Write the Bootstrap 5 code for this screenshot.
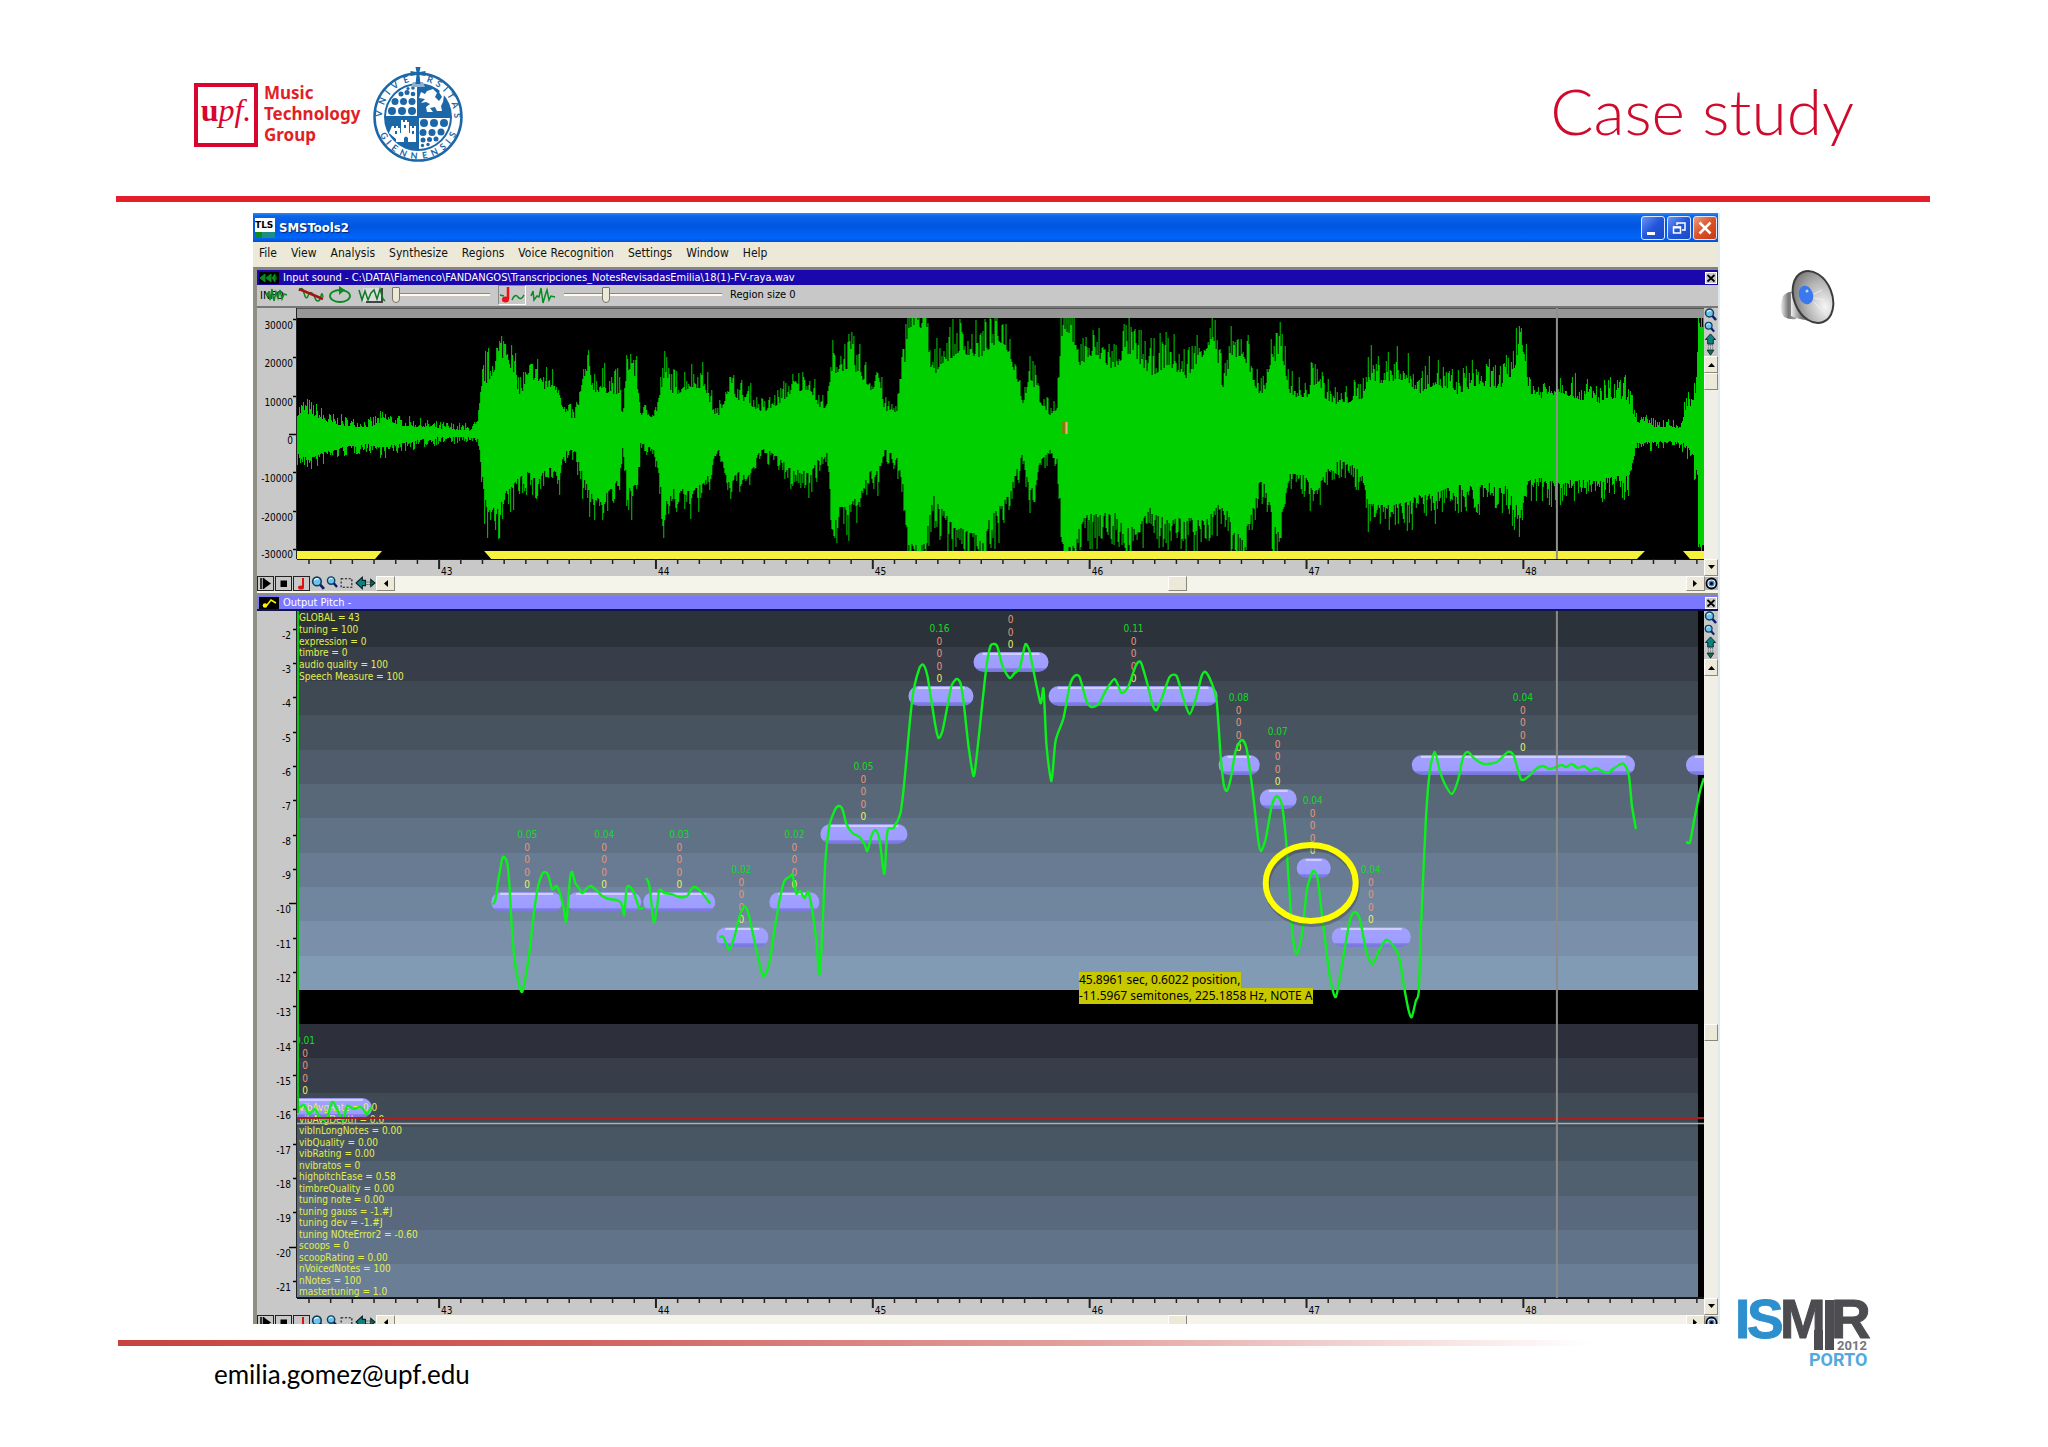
<!DOCTYPE html>
<html lang="en">
<head>
<meta charset="utf-8">
<meta name="viewport" content="width=device-width, initial-scale=1">
<title>Case study</title>
<link rel="stylesheet" href="https://cdn.jsdelivr.net/npm/bootstrap@5.3.0/dist/css/bootstrap.min.css">
<script src="https://cdn.jsdelivr.net/npm/bootstrap@5.3.0/dist/js/bootstrap.bundle.min.js"></script>
<style>
:root{--ui:"DejaVu Sans Condensed","Noto Sans",sans-serif}
body{background:#fff;color:#000;font-family:"Noto Sans",sans-serif}
svg{display:block}
.slide{padding:0 118px 0 116px}
.slide-head{height:196px;padding:64px 76px 0 78px}
.upf-box{width:64px;height:64px;border:4px solid #d8062f;color:#d8062f;font:italic 32px/46px "Liberation Serif",serif;margin-top:19px}
.upf-box b{font-style:normal}
.group-name{font:700 17px/21px "Noto Sans",sans-serif;color:#e21f26;width:105px;margin:18px 2px 0 6px}
.slide-title{font:300 64px/80px Lato,sans-serif;color:#cf0a2c;margin:7px 0 0}
.rule-top{height:6px;background:#e51e2c}
.rule-bottom{height:6px;margin:16px 128px 0 2px;background:linear-gradient(90deg,#c5443f,#d0605c 30%,#e2a09d 65%,#fff)}
.mail{font:26px/32px Lato,sans-serif;color:#000;margin:12px 0 0 98px;text-decoration:none;display:inline-block}
.side{width:210px;padding:58px 0 20px}
.speaker{margin-left:58px}
.logo-ismir{margin-left:15px}
.app-window{margin:11px 0 0 137px;background:#c8c8c8;font-family:var(--ui);border-right:2px solid #dfe9ee;overflow:hidden}
.app-title{height:29px;background:linear-gradient(#2a8cf5 0,#0a66ea 10%,#0055e0 45%,#0065fb 85%,#0050d8);padding:0 1px 0 2px;gap:4px}
.app-title h2{font:700 13px/20px "DejaVu Sans Condensed",sans-serif;color:#fff;margin:0;text-shadow:1px 1px 1px #002a80}
.win-btns{gap:2px}
.win-btn{width:24px;height:24px;padding:0;border:1px solid #dce8ff;border-radius:3px;background:linear-gradient(135deg,#6c93f5,#2156dc 50%,#1c49c4)}
.win-close{background:linear-gradient(135deg,#f09a80,#dd5027 50%,#c43c14)}
.app-menu{height:25px;background:#ece9d8;padding:0 0 3px 6px;gap:14px}
.app-menu a{font-size:12px;line-height:20px;color:#111;text-decoration:none}
.mdi{border-top:3px solid #85837a;border-left:4px solid #908f84}
.doc-title{height:15px;background:#1a08ad;color:#fff;padding:0 1px 0 2px;gap:4px;font-size:11px;line-height:14px}
.doc-title.alt{background:#7a78ff;border-bottom:2px solid #12124c}
.doc-close{width:12px;height:12px;padding:0;border:1px solid #fff;background:#c8c8c8}
.tools{height:23px;padding:0 0 2px 3px;border-bottom:2px solid #777}
.tools button{border:0;background:none;padding:0}
.tools .pressed{border:1px solid #888;border-right-color:#fff;border-bottom-color:#fff;height:20px}
.tools label{font-size:11px;line-height:16px}
.sld{-webkit-appearance:none;appearance:none;height:16px;background:none;margin:0}
.sld::-webkit-slider-runnable-track{height:3px;background:#fffbe8;border-top:1px solid #8a8a7a}
.sld::-webkit-slider-thumb{-webkit-appearance:none;width:8px;height:16px;margin-top:-7px;background:#ece9d8;border:1px solid #77756a;border-radius:1px 1px 4px 4px}
.y-scale{width:40px;flex:none}
.edge{width:14px;flex:none;background:#c8c8c8}
.vbar{background:#f0efe6}
.sb{background:#ece9d8;border:1px solid #fff;border-right-color:#8a887c;border-bottom-color:#8a887c;padding:0;line-height:0;display:flex;align-items:center;justify-content:center}
.edge .sb{width:14px;height:17px}
.wave{height:251px}
.pitch{height:687px}
.x-scale{height:17px;background:#c8c8c8}
.x-scale svg.flex-grow-1{margin-left:40px}
.hbar{height:17px;background:#f5f4ea}
.hbar .sb{width:19px;height:15px}
.hbar .tool-cell{width:17px;height:15px;border:1px solid #222;background:#c8c8c8;padding:0}
.hbar-strip{background:#c8c8c8;gap:1px}
.cut{height:9px;overflow:hidden}
.doc-gap{height:3px;background:#8f8e84}
.ax{font:10px var(--ui);fill:#000}
.nv{font:10px var(--ui);text-anchor:middle}
.readout{position:absolute;left:2px;color:#e2ee4e;font-size:10px;line-height:11px;white-space:nowrap;display:flex;flex-direction:column;justify-content:space-between}
.r-top{top:1px;height:70px}
.r-low{bottom:1px;height:195px}
.hint{position:absolute;left:56%;top:361px;margin-left:-6px;font:12px/16px "Noto Sans",sans-serif;color:#000;white-space:nowrap}
.hint span{background:#c8c800;display:table}
</style>
</head>
<body>
<svg width="0" height="0" class="position-absolute" aria-hidden="true">
 <defs>
  <symbol id="i-zoom" viewBox="0 0 13 13"><circle cx="5.500" cy="5" r="4" fill="#6cc4ee" stroke="#10405c" stroke-width="1.500"/><path d="M3 4Q5 1.500 7 3" stroke="#fff" fill="none"/><path d="M8.500 8l3.500 4" stroke="#0c1c70" stroke-width="2.500"/></symbol>
  <symbol id="i-up" viewBox="0 0 13 13"><path d="M6.500 1L12 7H9.500v5h-6V7H1z" fill="#0e8080" stroke="#022" /></symbol>
  <symbol id="i-down" viewBox="0 0 13 13"><path d="M4 0v5M6.500 0v5M9 0v5" stroke="#555" stroke-dasharray="1 1"/><path d="M2.500 6h8l-4 6z" fill="#0e7050" stroke="#022"/></symbol>
  <symbol id="i-sel" viewBox="0 0 14 13"><rect x="2" y="2.500" width="10" height="8" fill="none" stroke="#111" stroke-dasharray="2 1.500"/></symbol>
  <symbol id="i-lr" viewBox="0 0 20 13"><path d="M1 6.500L7 1v3h3v5H7v3z" fill="#0e8080" stroke="#022"/><path d="M11 5.500h4M11 8h4" stroke="#333" stroke-dasharray="1 1"/><path d="M15 3l4 3.500L15 10z" fill="#0e7050" stroke="#022"/></symbol>
  <symbol id="i-eye" viewBox="0 0 13 13"><rect width="13" height="13" fill="#b5b5b5"/><circle cx="6.500" cy="6.500" r="5" fill="#fff" stroke="#001" stroke-width="1.800"/><circle cx="6.500" cy="6.500" r="3" fill="#2f7fd0"/><circle cx="6.500" cy="6.500" r="1.500" fill="#000"/></symbol>
  <symbol id="i-play" viewBox="0 0 15 13"><path d="M3 1v11M5.500 1v11" stroke="#000" stroke-width="1.500"/><path d="M6 1.500l7 5-7 5z"/></symbol>
  <symbol id="i-stop" viewBox="0 0 15 13"><rect x="4.500" y="3.500" width="6.500" height="6.500"/></symbol>
  <symbol id="i-note" viewBox="0 0 15 13"><path d="M9 1v9" stroke="#e01010" stroke-width="2"/><ellipse cx="7" cy="10.500" rx="3" ry="2" fill="#e01010"/></symbol>
  <radialGradient id="cone" cx=".7" cy=".75" r=".8"><stop offset="0" stop-color="#f6f6f6"/><stop offset=".6" stop-color="#b4b4b4"/><stop offset="1" stop-color="#7b7b7b"/></radialGradient>
  <linearGradient id="horn"><stop offset="0" stop-color="#eee"/><stop offset=".4" stop-color="#777"/><stop offset="1" stop-color="#bbb"/></linearGradient>
  <linearGradient id="pill" x2="0" y2="1"><stop offset="0" stop-color="#9694ea"/><stop offset=".12" stop-color="#a3a1ff"/><stop offset=".78" stop-color="#9e9cff"/><stop offset=".84" stop-color="#7f7de6"/><stop offset="1" stop-color="#7876d8"/></linearGradient>
 </defs>
</svg>

<main class="slide">
 <header class="slide-head d-flex justify-content-between align-items-start">
  <div class="d-flex align-items-start">
   <div class="upf-box text-center"><b>u</b>pf.</div>
   <div class="group-name">Music<br>Technology<br>Group</div>
   <svg width="94" height="102" viewBox="0 0 94 102" role="img" aria-label="Universitas Giennensis seal">
    <circle cx="47" cy="53" r="43.500" fill="#fff" stroke="#1b67a8" stroke-width="2.500"/>
    <circle cx="47" cy="53" r="34" fill="#1b67a8"/>
    <g transform="translate(0 -1)">
    <path d="M46 22A32 32 0 0 0 15 53H46zM48 86A32 32 0 0 0 79 55H48z" fill="#fff"/>
    <g fill="#1b67a8"><circle cx="21" cy="48" r="4"/><circle cx="31" cy="48" r="4"/><circle cx="41" cy="48" r="4"/><circle cx="24" cy="38.500" r="3.500"/><circle cx="32.500" cy="38.500" r="3.500"/><circle cx="41" cy="38.500" r="3.500"/><circle cx="30" cy="31" r="2.500"/><circle cx="36" cy="29.500" r="2.500"/><circle cx="42" cy="31" r="2.300"/><circle cx="37" cy="25.500" r="1.600"/><circle cx="42" cy="25" r="1.800"/>
    <circle cx="53" cy="60" r="4"/><circle cx="63" cy="60" r="4"/><circle cx="73" cy="60" r="4"/><circle cx="52" cy="69.500" r="3.500"/><circle cx="61" cy="69.500" r="3.500"/><circle cx="70" cy="69" r="3.500"/><circle cx="52" cy="77" r="2.500"/><circle cx="58.500" cy="76.500" r="2.500"/><circle cx="65" cy="76" r="2.500"/><circle cx="51.500" cy="82.500" r="1.700"/><circle cx="57" cy="81.500" r="1.700"/></g>
    <path d="M21 63h2v2h2v-2h2v2h2v5h1V57h2v2h2v-2h2v2h2v11h1v-7h2v2h2v-2h2v16h-8v-4q-2-3-4 0v4h-8v-3l-7-6z" fill="#fff"/>
    <path d="M33 62h2v3h-2zM24 68h2v3h-2zM41 68h2v3h-2z" fill="#1b67a8"/>
    <path d="M50 29l4 2 2-3 6-2 4 4-2 4 4 4 3-4-3-5 3-3 2 6-1 7-2 4 1 5h-5l-2-4-5 1 3 4h-6l-1-5 4-3-4-2-5 1 4-4-6-1z" fill="#fff"/>
    </g>
    <path d="M42 18h10l2 5H40z" fill="#8fb0cf"/>
    <path d="M44.500 3h5l-1 5 6-1v5l-6-1 1 9h-5l1-9-6 1V7l6 1z" fill="#1b67a8"/>
    <g id="sealText" fill="#1b67a8" font-family="Lato,sans-serif" font-size="9" font-weight="700" text-anchor="middle"></g>
   </svg>
  </div>
  <h1 class="slide-title">Case study</h1>
 </header>
 <div class="rule-top"></div>

 <div class="d-flex">
  <div class="flex-grow-1">
   <section class="app-window" aria-label="SMSTools2">
    <div class="app-title d-flex align-items-center">
     <svg width="20" height="20" viewBox="0 0 20 20"><rect width="20" height="20" fill="#fff"/><rect y="14" width="20" height="6" fill="#1b8f86"/><rect y="14" width="7" height="6" fill="#0a8a20"/><text x="0" y="10" font-size="9" font-weight="700" font-family="DejaVu Sans">TLS</text></svg>
     <h2 class="me-auto">SMSTools2</h2>
     <div class="win-btns d-flex">
     <button class="win-btn" aria-label="Minimize"><svg width="22" height="22"><rect x="5" y="15" width="8" height="3" fill="#fff"/></svg></button>
     <button class="win-btn" aria-label="Restore"><svg width="22" height="22" fill="none" stroke="#fff" stroke-width="1.500"><path d="M9 8V6h8v7h-3"/><rect x="5.500" y="10" width="7" height="6"/><path d="M5 10.500h8" stroke-width="2"/></svg></button>
     <button class="win-btn win-close" aria-label="Close"><svg width="22" height="22"><path d="M5.500 5.500l11 11m0-11l-11 11" stroke="#fff" stroke-width="2.500"/></svg></button>
     </div>
    </div>
    <nav class="app-menu d-flex align-items-center"><a href="#">File</a><a href="#">View</a><a href="#">Analysis</a><a href="#">Synthesize</a><a href="#">Regions</a><a href="#">Voice Recognition</a><a href="#">Settings</a><a href="#">Window</a><a href="#">Help</a></nav>

    <div class="mdi">
     <div class="doc-title d-flex align-items-center">
      <svg width="20" height="12"><rect width="20" height="12" fill="#000"/><path d="M1 6l5-4v8zM7 6l5-4v8zM13 6l3-4v8zM17 4v4" fill="#0a8a20" stroke="#0a8a20"/></svg>
      <span class="me-auto">Input sound - C:\DATA\Flamenco\FANDANGOS\Transcripciones_NotesRevisadasEmilia\18(1)-FV-raya.wav</span>
      <button class="doc-close" aria-label="Close sound"><svg width="10" height="10"><path d="M1.500 2l7 6.500m0-6.500l-7 6.500" stroke="#000" stroke-width="1.800"/></svg></button>
     </div>
     <div class="tools d-flex align-items-center">
      <button aria-label="Info"><svg width="34" height="20"><text x="0" y="14" font-size="11" font-family="DejaVu Sans Condensed">INFO</text><path d="M6 10l2-2 2 7 2-11 2 12 2-9 2 6 2-8 2 9 2-5 3 1" fill="none" stroke="#0b8a25" stroke-width="1.500"/></svg></button>
      <button class="ms-1" aria-label="Remove noise"><svg width="26" height="20"><path d="M1 6q3-6 5 2t4 3 4-3 3 5 3 3 3-5 2 1" fill="none" stroke="#0b8a25" stroke-width="1.500"/><path d="M1 4l24 10" stroke="#a41616" stroke-width="2.500"/></svg></button>
      <button class="ms-1" aria-label="Loop"><svg width="26" height="20"><ellipse cx="12" cy="11" rx="10" ry="6" fill="none" stroke="#0b8a25" stroke-width="1.800"/><path d="M11 1l6 4-6 5z" fill="#0b8a25"/></svg></button>
      <button class="ms-1" aria-label="Spectrum"><svg width="30" height="20"><path d="M5 3h19v14H5z" fill="#ddd"/><path d="M24 3v14H8" fill="none" stroke="#444" stroke-width="2"/><path d="M1 5l3 10 3-9 3 9 3-7 3-3 3 9 3-10 3 10 2 2" fill="none" stroke="#0b7a25" stroke-width="1.500"/></svg></button>
      <input class="sld ms-1" style="width:98px" type="range" value="0" aria-label="Zoom">
      <button class="pressed ms-2" aria-label="Notes"><svg width="26" height="18"><path d="M9 1v12" stroke="#f00f14" stroke-width="2.500"/><ellipse cx="6.500" cy="13.500" rx="3.500" ry="3" fill="#f00f14"/><path d="M1 9l4 1M13 14q3-7 6-3t6-2" fill="none" stroke="#0b8a25" stroke-width="1.500"/></svg></button>
      <button class="ms-1" aria-label="Wave"><svg width="26" height="20"><path d="M1 11l2-5 1 9 3-4 2 1 2-9 2 15 2-7 2-6 2 10 2-4 4 1" fill="none" stroke="#0b8a25" stroke-width="1.500"/></svg></button>
      <input class="sld ms-2" style="width:158px" type="range" value="25" id="region" aria-label="Region size">
      <label for="region" class="ms-2">Region size 0</label>
     </div>
     <div class="d-flex wave">
      <svg class="y-scale" id="waveY" height="251"></svg>
      <svg class="flex-grow-1" id="wavePlot" height="251" width="100"></svg>
      <div class="edge d-flex flex-column">
       <svg width="13" height="13"><use href="#i-zoom"/></svg><svg width="11" height="12"><use href="#i-zoom"/></svg><svg width="13" height="12"><use href="#i-up"/></svg><svg width="13" height="11"><use href="#i-down"/></svg>
       <button class="sb" aria-label="Scroll up"><svg width="7" height="5"><path d="M0 5h7L3.500 1z"/></svg></button>
       <div class="sb"></div>
       <div class="vbar flex-grow-1"></div>
      </div>
     </div>
     <div class="x-scale d-flex"><svg class="flex-grow-1" width="100" height="17" data-axis></svg><div class="edge"><button class="sb" aria-label="Scroll down"><svg width="7" height="5"><path d="M0 0h7L3.500 4z"/></svg></button></div></div>
     <div class="hbar d-flex align-items-start"></div>
     <div class="doc-gap"></div>
     <div class="doc-title alt d-flex align-items-center">
      <svg width="20" height="12"><rect width="20" height="12" fill="#000"/><path d="M4 9l4-1 4-5 5 3" fill="none" stroke="#fff200" stroke-width="1.500"/><circle cx="6" cy="8.500" r="2.300" fill="#fff200"/></svg>
      <span class="me-auto">Output Pitch -</span>
      <button class="doc-close" aria-label="Close pitch"><svg width="10" height="10"><path d="M1.500 2l7 6.500m0-6.500l-7 6.500" stroke="#000" stroke-width="1.800"/></svg></button>
     </div>
     <div class="d-flex pitch">
      <svg class="y-scale" id="pitchY" height="687"></svg>
      <div class="flex-grow-1 position-relative">
       <svg id="pitchPlot" width="100%" height="687"></svg>
       <div class="readout r-top"><span>GLOBAL = 43</span><span>tuning = 100</span><span>expression = 0</span><span>timbre = 0</span><span>audio quality = 100</span><span>Speech Measure = 100</span></div>
       <div class="readout r-low"><span>vibAvgRate = 0.0</span><span>vibAvgDepth = 0.0</span><span>vibInLongNotes = 0.00</span><span>vibQuality = 0.00</span><span>vibRating = 0.00</span><span>nvibratos = 0</span><span>highpitchEase = 0.58</span><span>timbreQuality = 0.00</span><span>tuning note = 0.00</span><span>tuning gauss = -1.#J</span><span>tuning dev = -1.#J</span><span>tuning NOteError2 = -0.60</span><span>scoops = 0</span><span>scoopRating = 0.00</span><span>nVoicedNotes = 100</span><span>nNotes = 100</span><span>mastertuning = 1.0</span></div>
       <svg class="position-absolute top-0 start-0" id="pitchLines" width="100%" height="687"></svg>
       <div class="hint"><span>45.8961 sec, 0.6022 position,</span><span>-11.5967 semitones, 225.1858 Hz, NOTE A</span></div>
      </div>
      <div class="edge d-flex flex-column">
       <svg width="13" height="13"><use href="#i-zoom"/></svg><svg width="11" height="12"><use href="#i-zoom"/></svg><svg width="13" height="12"><use href="#i-up"/></svg><svg width="13" height="11"><use href="#i-down"/></svg>
       <button class="sb" aria-label="Scroll up"><svg width="7" height="5"><path d="M0 5h7L3.500 1z"/></svg></button>
       <div class="vbar flex-grow-1"></div>
       <div class="sb"></div>
       <div class="vbar" style="height:37.400%"></div>
      </div>
     </div>
     <div class="x-scale d-flex"><svg class="flex-grow-1" width="100" height="17" data-axis></svg><div class="edge"><button class="sb" aria-label="Scroll down"><svg width="7" height="5"><path d="M0 0h7L3.500 4z"/></svg></button></div></div>
     <div class="hbar cut d-flex align-items-start"></div>
    </div>
   </section>
   <div class="rule-bottom"></div>
   <a class="mail" href="mailto:emilia.gomez@upf.edu">emilia.gomez@upf.edu</a>
  </div>

  <aside class="side d-flex flex-column justify-content-between">
   <svg class="speaker" width="58" height="66" viewBox="0 0 58 66" role="img" aria-label="Sound">
    <path d="M5 36Q0 50 6 57q6 3 12 2l4-26q-10-4-17 3z" fill="url(#horn)"/>
    <path d="M13 34L25 16 40 62Q22 60 13 56z" fill="url(#horn)"/>
    <ellipse cx="35" cy="37" rx="19" ry="27" transform="rotate(-22 35 37)" fill="url(#cone)" stroke="#3c3c3c" stroke-width="2"/>
    <ellipse cx="28" cy="35" rx="7" ry="9.500" transform="rotate(-18 28 35)" fill="#3b78f0"/>
    <circle cx="29" cy="31" r="1.500" fill="#bcd4ff"/>
    <path d="M36 42l13 14M36 38l10 2M36 34l8-4" stroke="#eee" fill="none"/>
   </svg>
   <svg class="logo-ismir" width="140" height="74" viewBox="0 0 140 74" role="img" aria-label="ISMIR 2012 Porto">
    <g font-family="Liberation Sans,sans-serif" font-weight="700" font-size="55" stroke-width="1">
     <text x="0" y="42" fill="#2e8fce" stroke="#2e8fce">I</text><text x="12" y="42" fill="#2e8fce" stroke="#2e8fce">S</text><text x="45" y="42" fill="#4d4c50" stroke="#4d4c50">M</text><text x="96" y="42" fill="#4d4c50" stroke="#4d4c50">R</text>
    </g>
    <path d="M79 34h9v20h-9zM90 4h9v50h-9z" fill="#4d4c50"/>
    <g font-family="Roboto,sans-serif" font-weight="700"><text x="102" y="54" font-size="13" fill="#77767a">2012</text><text x="74" y="70" font-size="18" fill="#55a8dc">PORTO</text></g>
   </svg>
  </aside>
 </div>
</main>

<script>
// Both plots share one horizontal range; X turns a range value into a percentage of the plot.
const X0 = 298, W = 1406, X = v => ((v - X0) / W * 100).toFixed(3) + '%';
const id = n => document.getElementById(n);

// Letters round the seal, each turned to its angle
const ring = (s, angles, y) => [...s].map((c, i) => `<text x="47" y="${y}" transform="rotate(${angles[i]} 47 53)">${c}</text>`).join('');
id('sealText').innerHTML = ring('VNIVERSITAS', [-85, -66, -51, -36, -18, 18, 32, 45, 57, 72, 88], 17)
  + ring('GIENNENSIS', [61, 49, 37, 22, 6, -10, -25, -40, -51, -63], 95);

// Horizontal scroll strip, used under each plot
document.querySelectorAll('.hbar').forEach(h => h.innerHTML = `
 <div class="hbar-strip d-flex">
 <button class="tool-cell" aria-label="Play"><svg width="15" height="13"><use href="#i-play"/></svg></button>
 <button class="tool-cell" aria-label="Stop"><svg width="15" height="13"><use href="#i-stop"/></svg></button>
 <button class="tool-cell" aria-label="Note"><svg width="15" height="13"><use href="#i-note"/></svg></button>
 <svg width="14" height="14"><use href="#i-zoom"/></svg><svg width="12" height="12"><use href="#i-zoom"/></svg>
 <svg width="15" height="14"><use href="#i-sel"/></svg><svg width="21" height="14"><use href="#i-lr"/></svg></div>
 <button class="sb" aria-label="Scroll left"><svg width="5" height="7"><path d="M5 0v7L1 3.500z"/></svg></button>
 <div style="width:52.900%"></div><div class="sb"></div>
 <button class="sb ms-auto" aria-label="Scroll right"><svg width="5" height="7"><path d="M0 0v7l4-3.500z"/></svg></button>
 <svg width="13" height="15"><use href="#i-eye"/></svg>`);

// Time axes
document.querySelectorAll('[data-axis]').forEach(s => {
  let o = '<path d="M0 .5H3000" stroke="#111"/>';
  for (let i = -6; i < 59; i++) {
    const x = 440 + i * 21.67, big = i % 10 === 0;
    if (x > 1704) break;
    o += `<line x1="${X(x)}" x2="${X(x)}" y1="0" y2="${big ? 10 : 5}" stroke="#222" stroke-width="${big ? 2 : 1.5}"/>`;
    if (big) o += `<text class="ax" x="${X(x)}" dx="2" y="16">${43 + i / 10}</text>`;
  }
  s.innerHTML = o;
});

// Amplitude axis
let o = '';
for (let i = 0; i < 7; i++) {
  const y = Math.round(11 + i * 38.3);
  o += `<path d="M${i === 3 ? 32 : 36} ${y}.5H40" stroke="#000" stroke-width="1.500"/><text class="ax" x="36" y="${Math.min(y + 10, 250)}" text-anchor="end">${30000 - i * 10000}</text>`;
}
id('waveY').innerHTML = o + '<path d="M39.500 0v251" stroke="#222"/>';

// Semitone axis
o = '';
const T = v => 627.5 + (-v - 2) * 34.35 - 610;
for (let v = -2; v >= -21; v--) {
  const y = Math.round(T(v));
  o += `<path d="M${v % 10 ? 36 : 32} ${y}.5H40" stroke="#000" stroke-width="1.500"/><text class="ax" x="34" y="${y + 10}" text-anchor="end">${v}</text>`;
}
id('pitchY').innerHTML = o + '<path d="M39.500 0v687" stroke="#222"/>';

// Waveform: x, upper edge, lower edge
const env = `298 412 455 305 407 460 315 412 458 330 420 452 350 423 447 370 424 445 385 417 449 400 422 445 420 424 441 440 426 438 470 428 438 478 424 440 481 400 455 484 372 495 488 375 518 495 360 515 503 348 508 506 342 500 512 362 494 520 388 480 528 380 475 536 370 485 545 384 475 552 380 472 560 388 482 564 410 455 575 415 450 580 397 470 587 368 490 595 384 504 610 385 495 620 388 483 623 415 450 628 362 490 633 360 494 638 382 485 641 411 445 655 413 452 660 395 480 664 370 512 675 388 493 690 380 497 705 380 488 712 402 470 717 415 448 722 405 455 728 384 488 740 394 475 750 397 480 755 404 460 765 408 450 778 400 460 790 388 472 810 382 478 820 404 460 828 402 455 832 364 520 840 362 515 850 358 512 860 368 500 872 385 470 878 370 478 885 407 452 897 408 458 905 352 500 908 318 552 925 318 552 930 358 520 934 370 500 940 355 515 950 350 525 960 342 536 972 347 538 982 347 548 990 338 525 1003 332 510 1010 348 500 1018 376 470 1023 400 455 1030 368 500 1040 398 465 1050 411 452 1057 404 462 1061 335 520 1064 318 552 1076 337 552 1080 360 532 1085 350 522 1100 350 520 1115 362 520 1125 342 536 1140 354 532 1152 367 512 1168 355 528 1185 370 525 1200 350 528 1213 332 520 1222 382 503 1230 355 528 1242 345 548 1252 367 520 1258 390 485 1265 382 490 1270 358 510 1277 352 545 1282 348 520 1290 387 478 1305 395 480 1313 378 498 1318 374 495 1325 392 475 1340 401 463 1355 394 470 1362 392 480 1368 370 510 1380 374 512 1400 370 510 1420 385 500 1435 376 498 1455 388 490 1475 378 492 1490 380 488 1505 380 492 1515 358 510 1520 325 522 1523 342 508 1528 385 485 1540 392 483 1560 385 488 1575 392 484 1600 396 485 1615 393 480 1625 392 482 1630 400 475 1636 418 445 1650 423 443 1680 426 442 1686 402 448 1693 402 458 1697 372 480 1698 318 552 1705 318 552`.split(' ').map(Number);
let seed = 7;
const rnd = () => (seed = (seed * 16807) % 2147483647) / 2147483647;
let up = [], lo = [], k = 0;
for (let x = 298; x <= 1703; x++) {
  while (env[k + 3] < x) k += 3;
  const t = (x - env[k]) / (env[k + 3] - env[k]);
  const a = env[k + 1] + t * (env[k + 4] - env[k + 1]), b = env[k + 2] + t * (env[k + 5] - env[k + 2]);
  const n = 5 + Math.min(30, (b - a) * .2), j = () => Math.pow(rnd(), 2.2) * n * 1.1 - n * .25;
  up.push([x, Math.max(317, a - j())]); lo.push([x, Math.min(550, b + j())]);
}
const step = p => p.map(q => `${q[0]} ${q[1].toFixed(0)} ${q[0] + 1} ${q[1].toFixed(0)}`).join(' ');
const low = lo.reverse().map(q => `${q[0] + 1} ${q[1].toFixed(0)} ${q[0]} ${q[1].toFixed(0)}`).join(' ');
id('wavePlot').innerHTML = `<rect width="100%" height="100%"/><rect width="100%" height="10" fill="#979797"/><path d="M0 .5H3000" stroke="#555"/>
 <svg width="100%" height="251" viewBox="298 307 1406 251" preserveAspectRatio="none">
 <path d="M${step(up)} ${low}z" fill="#00cf00"/>
 <path d="M298 550H383L376 558H298zM485 550H1645L1637 558H492zM1683 550H1704V558H1690z" fill="#f5f13c"/>
 <path d="M1063 421h2v12h-2z" fill="#f04010"/><path d="M1066 421h2v12h-2z" fill="#eab080"/></svg>
 <line x1="${X(1557)}" x2="${X(1557)}" y1="0" y2="251" stroke="#909090" stroke-width="2"/>`;

// Pitch plot: semitone bands, notes, curve
const c1 = ['#2b323a','#373e49','#3e4953','#475460','#505c6b','#596878','#607386','#687b92','#70859e','#7a90aa','#829bb5'];
const c2 = ['#2d303a','#383d4a','#404a55','#485563','#51606e','#5a687d','#617388','#6a7e95'];
o = '<rect width="100%" height="100%"/>';
const bw = X(1698);
c1.forEach((c, i) => { const y = i ? Math.round(35.5 + (i - 1) * 34.35) : 0, e = Math.round(35.5 + i * 34.35); o += `<rect y="${y}" width="${bw}" height="${e - y}" fill="${c}"/>`; });
c2.forEach((c, i) => { const y = Math.round(413 + i * 34.35), e = Math.round(413 + (i + 1) * 34.35); o += `<rect y="${y}" width="${bw}" height="${e - y}" fill="${c}"/>`; });
o += '<path d="M0 686.500H3000" stroke="#12182c"/>';
const notes = [[492,563,-10,528,'0.05'],[568,642,-10,605,'0.04'],[644,716,-10,680,'0.03'],[717,769,-11,742,'0.02'],[770,820,-10,795,'0.02'],[821,908,-8,864,'0.05'],[909,974,-4,940,'0.16'],[974,1049,-3,1011,''],[1049,1218,-4,1134,'0.11'],[1219,1260,-6,1239,'0.08'],[1260,1297,-7,1278,'0.07'],[1297,1331,-9,1313,'0.04'],[1332,1411,-11,1371,'0.04'],[1412,1635,-6,1523,'0.04'],[1686,1730,-6,0,''],[280,373,-16,306,'0.01']];
notes.forEach(([a, b, v, m, t]) => {
  const y = Math.round(T(v)), w = ((b - a) / W * 100).toFixed(3) + '%';
  o += `<rect x="${X(a)}" y="${y - 11}" width="${w}" height="20" rx="10" fill="url(#pill)"/>`;
  if (b - a > 20) o += `<line x1="${X(a + 9)}" x2="${X(b - 9)}" y1="${y - 9}" y2="${y - 9}" stroke="#cfceff" stroke-width="2"/>`;
  if (!m) return;
  const L = (s, d, f) => y + d < 4 ? '' : `<text class="nv" x="${X(m)}" y="${y + d}" fill="${f}">${s}</text>`;
  o += L(t, -65, '#12dc22') + L(0, -52, '#e8967c') + L(0, -40, '#e8967c') + L(0, -27, '#e8967c') + L(0, -15, '#eaf06a');
});
id('pitchPlot').innerHTML = o;

const curves = [
 '493 903 496 900 499 880 503 858 505 856 508 862 510 880 512 915 515 955 519 980 523 991 527 972 531 945 535 910 539 885 543 873 546 871 549 874 553 888 557 885 560 890 564 905 567 921 569 900 571 876 573 871 576 882 579 886 583 892 588 887 592 885 598 890 603 895 610 898 617 899 622 902 625 914 627 890 629 885 634 890 640 907 645 906',
 '647 877 650 884 653 910 655 922 658 905 660 889 665 892 672 893 680 896 688 895 692 888 696 886 701 890 706 896 711 903',
 '720 936 724 936 730 949 735 936 740 916 745 905 749 912 753 930 758 953 762 970 765 975 770 962 775 930 780 900 785 880 790 876 793 874 796 888 797 893 801 890 805 897 809 891 813 910 817 940 820 973 823 930 826 860 830 825 835 810 839 805 843 808 847 823 853 832 860 836 865 843 868 850 872 835 876 829 880 838 885 873 888 830 894 827 901 812 905 780 910 725 914 690 920 667 924 664 928 675 932 700 936 725 939 737 943 730 948 705 952 685 957 678 961 682 964 700 969 745 974 775 977 757 982 710 987 665 991 645 995 643 998 646 1003 665 1010 677 1015 672 1020 668 1023 655 1026 643 1030 650 1034 670 1041 702 1044 688 1047 745 1052 780 1056 740 1064 717 1070 685 1075 675 1080 676 1087 700 1092 706 1099 703 1106 690 1115 678 1122 692 1129 685 1136 665 1141 661 1147 680 1153 704 1157 709 1163 695 1170 676 1177 675 1183 695 1190 713 1197 695 1202 675 1206 671 1212 682 1217 700 1221 755 1224 783 1227 790 1231 778 1236 750 1242 739 1247 748 1253 790 1258 835 1261 850 1266 838 1272 805 1277 795 1282 803 1286 835 1289 880 1293 935 1297 953 1302 935 1307 890 1311 875 1314 870 1318 878 1323 920 1330 975 1336 996 1342 965 1350 920 1355 911 1360 918 1367 952 1373 963 1379 950 1386 939 1392 943 1399 955 1405 990 1409 1010 1412 1016 1416 1000 1419 990 1421 930 1426 820 1430 770 1435 751 1440 770 1445 783 1452 793 1458 780 1463 757 1468 751 1475 758 1484 763 1497 761 1508 751 1514 755 1521 778 1528 776 1536 768 1543 765 1550 768 1556 766 1562 764 1566 766 1572 763 1578 767 1584 765 1590 769 1596 767 1602 770 1608 772 1613 768 1619 764 1624 763 1629 775 1632 805 1636 828',
 '1686 841 1690 841 1694 820 1700 790 1704 777',
 '299 1107 305 1104 310 1113 316 1108 322 1118 328 1117 333 1101 338 1108 344 1120 348 1105 355 1108 362 1106 368 1113 372 1106'];

// Catmull-Rom spline: passes through every measured point
const smooth = c => {
  const n = c.split(' ').map(Number), p = [];
  for (let i = 0; i < n.length; i += 2) p.push([n[i], n[i + 1]]);
  let d = 'M' + p[0];
  for (let i = 0; i < p.length - 1; i++) {
    const a = p[i - 1] || p[i], b = p[i], e = p[i + 1], f = p[i + 2] || e;
    d += `C${(b[0] + (e[0] - a[0]) / 8).toFixed(1)} ${(b[1] + (e[1] - a[1]) / 8).toFixed(1)} ${(e[0] - (f[0] - b[0]) / 8).toFixed(1)} ${(e[1] - (f[1] - b[1]) / 8).toFixed(1)} ${e}`;
  }
  return d;
};
id('pitchLines').innerHTML = `<svg width="100%" height="687" viewBox="298 610 1406 687" preserveAspectRatio="none" fill="none">
 <path d="${curves.map(smooth).join('')}" stroke="#0cf01c" stroke-width="2.400" stroke-linejoin="round"/>
 <path d="M299 610V1112" stroke="#08c414" stroke-width="2"/></svg>
 <path d="M0 507H3000" stroke="#a82024" stroke-width="2"/><path d="M0 512.500H3000" stroke="#a9b0b6" stroke-width="1.500"/>
 <line x1="${X(1557)}" x2="${X(1557)}" y1="0" y2="687" stroke="#8c8a88" stroke-width="2"/>
 <ellipse cx="${X(1312)}" cy="275" rx="45" ry="38" fill="none" stroke="#333" stroke-opacity=".35" stroke-width="6"/>
 <ellipse cx="${X(1311)}" cy="272" rx="45" ry="38" fill="none" stroke="#ffff00" stroke-width="6"/>`;
</script>
</body>
</html>
